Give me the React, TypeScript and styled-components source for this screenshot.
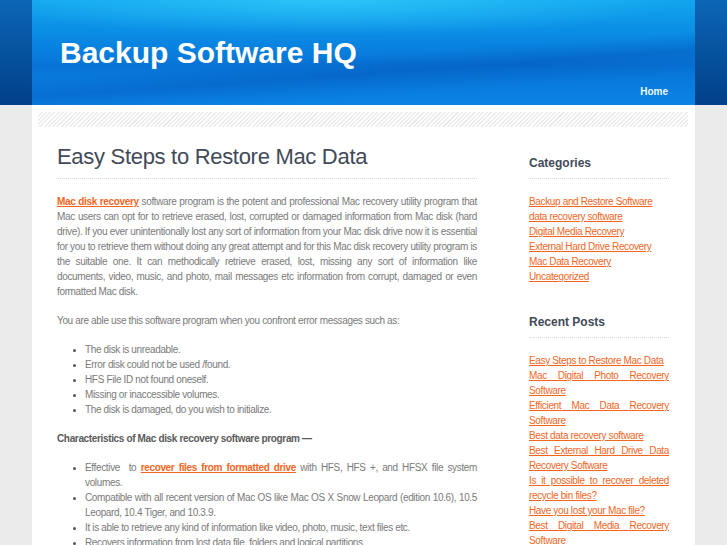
import styled, { createGlobalStyle } from "styled-components";

const GlobalStyle = createGlobalStyle`
  body {
    margin: 0;
    background: linear-gradient(#0b66b6, #023f88) top / 100% 105px no-repeat, #ebebeb;
    font-family: "Liberation Sans", Arial, sans-serif;
  }
`;

const Wrapper = styled.div`
  width: 663px;
  margin: 0 auto;
`;

const Header = styled.header`
  height: 105px;
  box-sizing: border-box;
  padding: 35px 27px 6px 28px;
  display: flex;
  flex-direction: column;
  justify-content: space-between;
  background: radial-gradient(ellipse 70% 45% at 45% 0%, rgba(60, 215, 255, 0.6), transparent 75%),
    linear-gradient(176deg, transparent 52%, rgba(0, 50, 150, 0.22) 64%, transparent 80%),
    linear-gradient(#12a6ee 0%, #0a8ae4 35%, #0774d6 62%, #0a84e6 100%);
`;

const SiteTitle = styled.h1`
  margin: 0;
  font-size: 30px;
  line-height: 36px;
  font-weight: bold;
  color: #fff;
`;

const Nav = styled.nav`
  display: flex;
  justify-content: flex-end;
  a {
    color: #eef6ff;
    font-size: 10px;
    font-weight: bold;
    line-height: 15px;
    text-decoration: none;
  }
`;

const Container = styled.div`
  background: #fff;
  padding: 7px 0 40px;
`;

const Hatch = styled.div`
  height: 15px;
  margin: 0 7px 0 6px;
  background: repeating-linear-gradient(
    -45deg,
    #ffffff 0px,
    #ffffff 1.5px,
    #ececec 1.5px,
    #ececec 3px
  );
`;

const Columns = styled.div`
  display: grid;
  grid-template-columns: 420px 140px;
  column-gap: 52px;
  padding: 15px 26px 0 25px;
  font-size: 10px;
  line-height: 15px;
  letter-spacing: -0.35px;
  color: #7a7a7a;
`;

const PostTitle = styled.h2`
  margin: 0 0 15px;
  padding-bottom: 6px;
  border-bottom: 1px dotted #d6d6d6;
  font-size: 22px;
  line-height: 30px;
  font-weight: normal;
  letter-spacing: -0.3px;
  color: #424a58;
`;

const Para = styled.p<{ $bold?: boolean }>`
  margin: 0 0 14px;
  text-align: justify;
  font-weight: ${(p) => (p.$bold ? "bold" : "normal")};
  color: ${(p) => (p.$bold ? "#5a5a5a" : "#7a7a7a")};
`;

const List = styled.ul`
  margin: 0 0 14px;
  padding-left: 28px;
  li {
    text-align: justify;
  }
  li::marker {
    color: #555;
    font-size: 9px;
  }
`;

const Link = styled.a<{ $strong?: boolean }>`
  color: #f4661e;
  text-decoration: underline;
  font-weight: ${(p) => (p.$strong ? "bold" : "normal")};
`;

const Sidebar = styled.aside`
  padding-top: 12px;
`;

const Widget = styled.section`
  margin-bottom: 29px;
`;

const WidgetTitle = styled.h3`
  margin: 0 0 15px;
  padding-bottom: 6px;
  border-bottom: 1px dotted #d6d6d6;
  font-size: 12px;
  line-height: 18px;
  font-weight: bold;
  letter-spacing: 0;
  color: #424a58;
`;

const WidgetList = styled.ul`
  margin: 0;
  padding: 0;
  list-style: none;
  li {
    text-align: justify;
  }
`;

const categories = [
  "Backup and Restore Software",
  "data recovery software",
  "Digital Media Recovery",
  "External Hard Drive Recovery",
  "Mac Data Recovery",
  "Uncategorized",
];

const recentPosts = [
  "Easy Steps to Restore Mac Data",
  "Mac Digital Photo Recovery Software",
  "Efficient Mac Data Recovery Software",
  "Best data recovery software",
  "Best External Hard Drive Data Recovery Software",
  "Is it possible to recover deleted recycle bin files?",
  "Have you lost your Mac file?",
  "Best Digital Media Recovery Software",
];

const errors = [
  "The disk is unreadable.",
  "Error disk could not be used /found.",
  "HFS File ID not found oneself.",
  "Missing or inaccessible volumes.",
  "The disk is damaged, do you wish to initialize.",
];

export default function App() {
  return (
    <>
      <GlobalStyle />
      <Wrapper>
        <Header>
          <SiteTitle>Backup Software HQ</SiteTitle>
          <Nav>
            <a href="#">Home</a>
          </Nav>
        </Header>
        <Container>
          <Hatch />
          <Columns>
            <main>
              <PostTitle>Easy Steps to Restore Mac Data</PostTitle>
              <Para>
                <Link $strong href="#">
                  Mac disk recovery
                </Link>{" "}
                software program is the potent and professional Mac recovery utility program that Mac
                users can opt for to retrieve erased, lost, corrupted or damaged information from Mac
                disk (hard drive). If you ever unintentionally lost any sort of information from your
                Mac disk drive now it is essential for you to retrieve them without doing any great
                attempt and for this Mac disk recovery utility program is the suitable one. It can
                methodically retrieve erased, lost, missing any sort of information like documents,
                video, music, and photo, mail messages etc information from corrupt, damaged or even
                formatted Mac disk.
              </Para>
              <Para>You are able use this software program when you confront error messages such as:</Para>
              <List>
                {errors.map((e) => (
                  <li key={e}>{e}</li>
                ))}
              </List>
              <Para $bold>Characteristics of Mac disk recovery software program —</Para>
              <List>
                <li>
                  Effective&nbsp; to{" "}
                  <Link $strong href="#">
                    recover files from formatted drive
                  </Link>{" "}
                  with HFS, HFS +, and HFSX file system volumes.
                </li>
                <li>
                  Compatible with all recent version of Mac OS like Mac OS X Snow Leopard (edition
                  10.6), 10.5 Leopard, 10.4 Tiger, and 10.3.9.
                </li>
                <li>It is able to retrieve any kind of information like video, photo, music, text files etc.</li>
                <li>Recovers information from lost data file, folders and logical partitions.</li>
                <li>Supports recovery from formatted, corrupted and inaccessible Mac volumes.</li>
              </List>
            </main>
            <Sidebar>
              <Widget>
                <WidgetTitle>Categories</WidgetTitle>
                <WidgetList>
                  {categories.map((c) => (
                    <li key={c}>
                      <Link href="#">{c}</Link>
                    </li>
                  ))}
                </WidgetList>
              </Widget>
              <Widget>
                <WidgetTitle>Recent Posts</WidgetTitle>
                <WidgetList>
                  {recentPosts.map((r) => (
                    <li key={r}>
                      <Link href="#">{r}</Link>
                    </li>
                  ))}
                </WidgetList>
              </Widget>
            </Sidebar>
          </Columns>
        </Container>
      </Wrapper>
    </>
  );
}
